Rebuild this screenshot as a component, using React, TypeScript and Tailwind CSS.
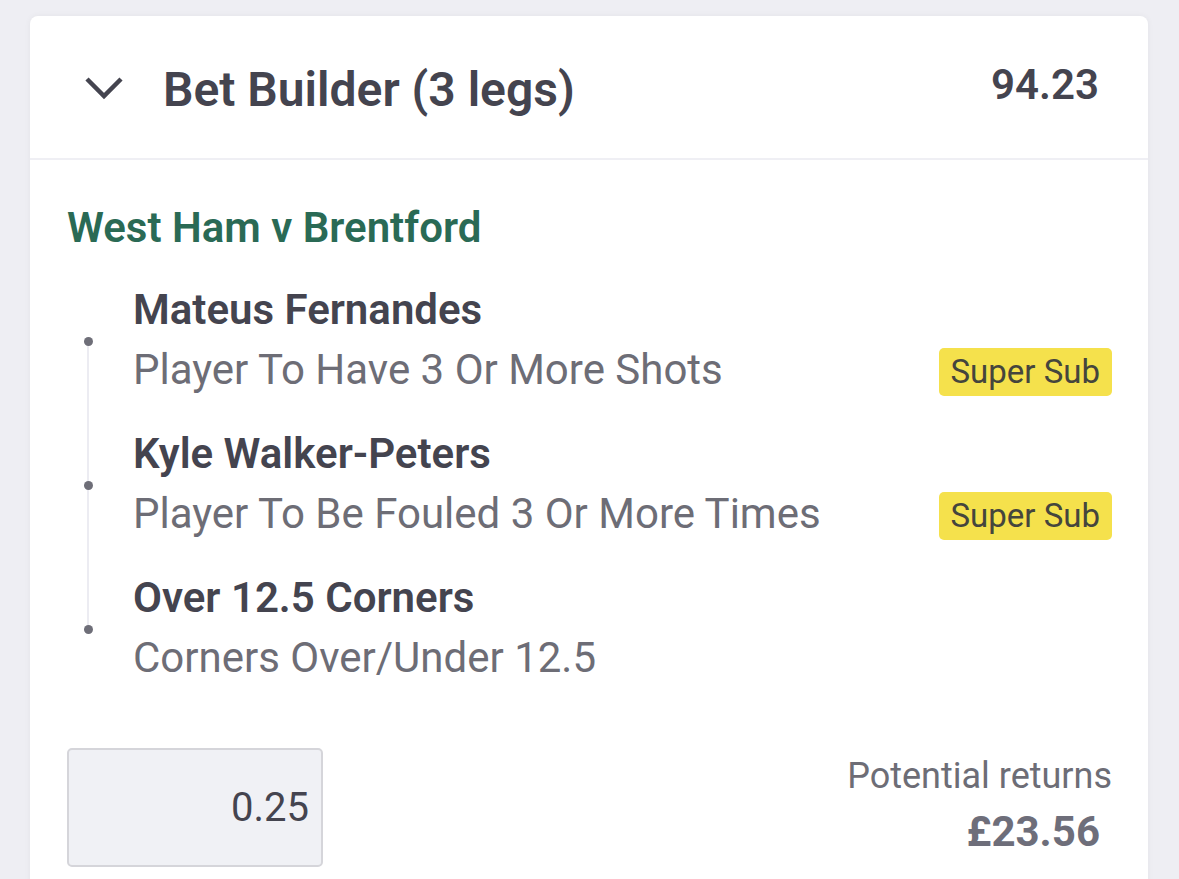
import React from 'react';

interface Leg {
  name: string;
  market: string;
  superSub: boolean;
}

const legs: Leg[] = [
  { name: 'Mateus Fernandes', market: 'Player To Have 3 Or More Shots', superSub: true },
  { name: 'Kyle Walker-Peters', market: 'Player To Be Fouled 3 Or More Times', superSub: true },
  { name: 'Over 12.5 Corners', market: 'Corners Over/Under 12.5', superSub: false },
];

const ChevronDown = () => (
  <svg width="38" height="24" viewBox="0 0 38 24" fill="none">
    <path d="M2 3 L19 20 L36 3" stroke="#44444f" strokeWidth="4.5" strokeLinecap="butt" strokeLinejoin="miter" />
  </svg>
);

export default function App() {
  return (
    <div className="h-[879px] overflow-hidden bg-[#eeeef3] pt-4 pl-[30px] pr-[31px] font-['Roboto',sans-serif]">
      <div className="bg-white rounded-t-lg shadow-[0_0_6px_rgba(0,0,0,0.05)] h-[900px]">
        {/* Header */}
        <div className="flex items-center h-[144px] pl-[55px] pr-[49px] border-b-2 border-[#efeff4]">
          <div className="w-[38px] flex items-center mt-[2px]">
            <ChevronDown />
          </div>
          <h1 className="ml-[40px] flex-1 text-[48px] font-semibold text-[#44444f] leading-none mt-[6px]">Bet Builder (3 legs)</h1>
          <span className="text-[42px] font-semibold text-[#44444f] leading-none -mt-[4px]">94.23</span>
        </div>

        {/* Body */}
        <div className="pl-[37px] pr-[36px] pt-[38px]">
          <div className="text-[42px] font-semibold text-[#2a6a55] leading-[60px]">West Ham v Brentford</div>

          <div className="relative mt-[22px]">
            <div className="absolute left-[20px] top-[61px] bottom-[59px] w-[2px] bg-[#ececf2]" />
            <div className="flex flex-col gap-[24px]">
              {legs.map((leg) => (
                <div key={leg.name} className="flex">
                  <div className="w-[66px] shrink-0 flex items-center">
                    <div className="relative ml-[17px] w-[9px] h-[9px] rounded-full bg-[#6e6e78] mt-[3px]" />
                  </div>
                  <div className="flex-1 flex flex-col">
                    <div className="text-[42px] font-semibold text-[#44444f] leading-[60px]">{leg.name}</div>
                    <div className="flex items-center justify-between h-[60px]">
                      <span className="text-[42px] text-[#6d6d76] leading-[60px]">{leg.market}</span>
                      {leg.superSub && (
                        <span className="bg-[#f5e14c] text-[#45453d] text-[33px] leading-[48px] h-[48px] px-[12px] mt-[4px] rounded-[5px]">
                          Super Sub
                        </span>
                      )}
                    </div>
                  </div>
                </div>
              ))}
            </div>
          </div>

          {/* Stake */}
          <div className="flex items-start justify-between mt-[60px]">
            <div className="w-[256px] h-[119px] bg-[#f0f1f5] border-2 border-[#d5d5da] rounded-[5px] flex items-center justify-end pr-[12px]">
              <span className="text-[40px] text-[#44444f] leading-none">0.25</span>
            </div>
            <div className="flex flex-col items-end mt-[4px]">
              <span className="text-[36px] text-[#6d6d76] leading-[48px]">Potential returns</span>
              <span className="text-[42px] font-bold text-[#6e6e7a] leading-[52px] mr-[12px] mt-[6px]">£23.56</span>
            </div>
          </div>
        </div>
      </div>
    </div>
  );
}
